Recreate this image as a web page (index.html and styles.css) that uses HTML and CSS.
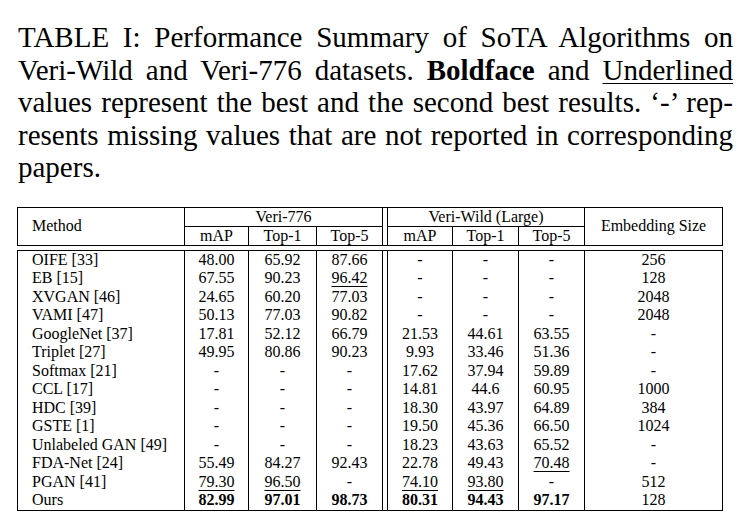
FILE: index.html
```html
<!DOCTYPE html>
<html lang="en">
<head>
<meta charset="utf-8">
<title>TABLE I</title>
<link rel="stylesheet" href="styles.css">
</head>
<body>
<div class="page">
<p class="caption">TABLE I: Performance Summary of SoTA Algorithms on<br>Veri-Wild and Veri-776 datasets. <b>Boldface</b> and <u>Underlined</u><br>values represent the best and the second best results. ‘-’ rep-<br>resents missing values that are not reported in corresponding<br>papers.</p>
<table class="results">
<colgroup>
<col class="c-method"><col class="c-a"><col class="c-b"><col class="c-c"><col class="c-dbl"><col class="c-d"><col class="c-e"><col class="c-f"><col class="c-emb">
</colgroup>
<thead>
<tr class="h1">
<th rowspan="2" class="method">Method</th>
<th colspan="3">Veri-776</th>
<th rowspan="2" class="dbl"></th>
<th colspan="3">Veri-Wild (Large)</th>
<th rowspan="2">Embedding Size</th>
</tr>
<tr class="h2">
<th>mAP</th><th>Top-1</th><th>Top-5</th>
<th>mAP</th><th>Top-1</th><th>Top-5</th>
</tr>
</thead>
<tbody>
<tr class="gap"><td colspan="9"></td></tr>
<tr><td class="method">OIFE [33]</td><td>48.00</td><td>65.92</td><td>87.66</td><td class="dbl"></td><td>-</td><td>-</td><td>-</td><td>256</td></tr>
<tr><td class="method">EB [15]</td><td>67.55</td><td>90.23</td><td><span class="u">96.42</span></td><td class="dbl"></td><td>-</td><td>-</td><td>-</td><td>128</td></tr>
<tr><td class="method">XVGAN [46]</td><td>24.65</td><td>60.20</td><td>77.03</td><td class="dbl"></td><td>-</td><td>-</td><td>-</td><td>2048</td></tr>
<tr><td class="method">VAMI [47]</td><td>50.13</td><td>77.03</td><td>90.82</td><td class="dbl"></td><td>-</td><td>-</td><td>-</td><td>2048</td></tr>
<tr><td class="method">GoogleNet [37]</td><td>17.81</td><td>52.12</td><td>66.79</td><td class="dbl"></td><td>21.53</td><td>44.61</td><td>63.55</td><td>-</td></tr>
<tr><td class="method">Triplet [27]</td><td>49.95</td><td>80.86</td><td>90.23</td><td class="dbl"></td><td>9.93</td><td>33.46</td><td>51.36</td><td>-</td></tr>
<tr><td class="method">Softmax [21]</td><td>-</td><td>-</td><td>-</td><td class="dbl"></td><td>17.62</td><td>37.94</td><td>59.89</td><td>-</td></tr>
<tr><td class="method">CCL [17]</td><td>-</td><td>-</td><td>-</td><td class="dbl"></td><td>14.81</td><td>44.6</td><td>60.95</td><td>1000</td></tr>
<tr><td class="method">HDC [39]</td><td>-</td><td>-</td><td>-</td><td class="dbl"></td><td>18.30</td><td>43.97</td><td>64.89</td><td>384</td></tr>
<tr><td class="method">GSTE [1]</td><td>-</td><td>-</td><td>-</td><td class="dbl"></td><td>19.50</td><td>45.36</td><td>66.50</td><td>1024</td></tr>
<tr><td class="method">Unlabeled GAN [49]</td><td>-</td><td>-</td><td>-</td><td class="dbl"></td><td>18.23</td><td>43.63</td><td>65.52</td><td>-</td></tr>
<tr><td class="method">FDA-Net [24]</td><td>55.49</td><td>84.27</td><td>92.43</td><td class="dbl"></td><td>22.78</td><td>49.43</td><td><span class="u">70.48</span></td><td>-</td></tr>
<tr><td class="method">PGAN [41]</td><td><span class="u">79.30</span></td><td><span class="u">96.50</span></td><td>-</td><td class="dbl"></td><td><span class="u">74.10</span></td><td><span class="u">93.80</span></td><td>-</td><td>512</td></tr>
<tr class="last"><td class="method">Ours</td><td><b>82.99</b></td><td><b>97.01</b></td><td><b>98.73</b></td><td class="dbl"></td><td><b>80.31</b></td><td><b>94.43</b></td><td><b>97.17</b></td><td>128</td></tr>
</tbody>
</table>
</div>
</body>
</html>
```
FILE: styles.css
```css
html, body {
  margin: 0;
  padding: 0;
  background: #fff;
  color: #000;
}

.page {
  padding: 21px 0 0 0;
  font-family: "Liberation Serif", "Times New Roman", serif;
}

.caption {
  margin: 0 0 0 18px;
  width: 715px;
  font-size: 29px;
  line-height: 32.5px;
  text-align: justify;
  text-align-last: justify;
}

.caption u {
  text-decoration-thickness: 1px;
  text-underline-offset: 3px;
}

.results {
  margin: 23px 0 0 17px;
  border-collapse: collapse;
  table-layout: fixed;
  width: 705px;
  font-size: 16px;
  line-height: 18px;
}

.c-method { width: 167px; }
.c-a { width: 64px; }
.c-b { width: 68px; }
.c-c { width: 66px; }
.c-dbl { width: 5px; }
.c-d { width: 65px; }
.c-e { width: 66px; }
.c-f { width: 66px; }
.c-emb { width: 138px; }

.results th,
.results td {
  padding: 0;
  text-align: center;
  font-weight: normal;
  white-space: nowrap;
}

.results th {
  border: 1px solid #000;
}

.results .h1 { height: 19px; }
.results .h2 { height: 18px; }

.results td {
  border-left: 1px solid #000;
  border-right: 1px solid #000;
  height: 18.5px;
  line-height: 18px;
}

.results .method {
  text-align: left;
  padding-left: 14px;
}

.results .gap td {
  height: 4px;
  border-left: none;
  border-right: none;
  border-bottom: 1px solid #000;
  line-height: 0;
  font-size: 0;
}

.results .last td {
  border-bottom: 1px solid #000;
}

.results b {
  font-weight: bold;
}

.u {
  text-decoration: underline;
  text-decoration-thickness: 1px;
  text-underline-offset: 3px;
}
```
